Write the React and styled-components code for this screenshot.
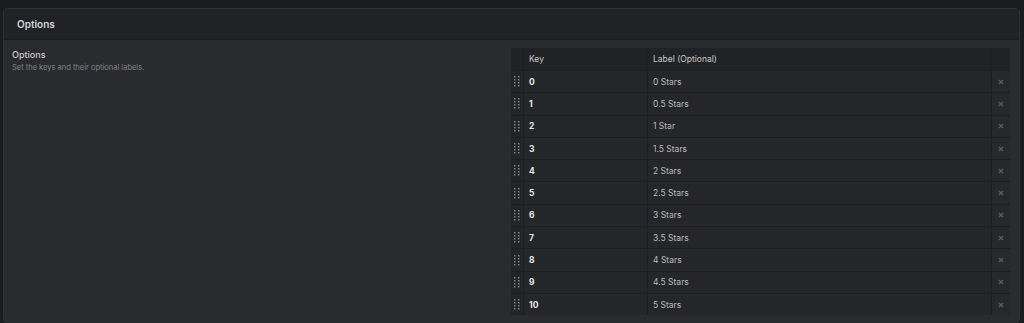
import React from "react";
import styled, { createGlobalStyle } from "styled-components";

const options = [
  ["0", "0 Stars"],
  ["1", "0.5 Stars"],
  ["2", "1 Star"],
  ["3", "1.5 Stars"],
  ["4", "2 Stars"],
  ["5", "2.5 Stars"],
  ["6", "3 Stars"],
  ["7", "3.5 Stars"],
  ["8", "4 Stars"],
  ["9", "4.5 Stars"],
  ["10", "5 Stars"],
];

function DragHandle() {
  return (
    <svg width="6" height="11" viewBox="0 0 6 11">
      {[0, 1, 2, 3].map((r) =>
        [0, 1].map((c) => (
          <rect
            key={r + "-" + c}
            x={c * 4}
            y={r * 3}
            width="1.5"
            height="1.5"
            fill="#808186"
          />
        ))
      )}
    </svg>
  );
}

function CloseIcon() {
  return (
    <svg width="6" height="6" viewBox="0 0 6 6">
      <path d="M1 1 L5 5 M5 1 L1 5" stroke="#595a5f" strokeWidth="1.4" />
    </svg>
  );
}

export default function App() {
  return (
    <>
      <GlobalStyle />
      <Card>
        <CardHeader>Options</CardHeader>
        <CardBody>
          <Intro>
            <h4>Options</h4>
            <p>Set the keys and their optional labels.</p>
          </Intro>
          <Table>
            <HeadRow>
              <Cell />
              <Cell $head>Key</Cell>
              <Cell $head>Label (Optional)</Cell>
              <Cell />
            </HeadRow>
            {options.map(([key, label]) => (
              <Row key={key}>
                <HandleCell>
                  <DragHandle />
                </HandleCell>
                <Cell $bold>{key}</Cell>
                <Cell>{label}</Cell>
                <DeleteCell>
                  <CloseIcon />
                </DeleteCell>
              </Row>
            ))}
          </Table>
        </CardBody>
      </Card>
    </>
  );
}

const GlobalStyle = createGlobalStyle`
  body {
    margin: 0;
    background: #1b1c1f;
    font-family: Inter, "Noto Sans", sans-serif;
    color: #d6d7da;
  }
`;

const Card = styled.div`
  margin: 8px 4px 0 3px;
  border: 1px solid #2f3034;
  border-radius: 5px;
  overflow: hidden;
  background: #2a2b2f;
`;

const CardHeader = styled.div`
  height: 30px;
  display: flex;
  align-items: center;
  padding-left: 13px;
  background: #212225;
  border-bottom: 1px solid #1c1d20;
  font-size: 10px;
  font-weight: 600;
  color: #d3d4d8;
`;

const CardBody = styled.div`
  display: grid;
  grid-template-columns: 1fr 499px;
  padding: 8px 9px 8px 8px;
  gap: 8px;
`;

const Intro = styled.div`
  padding-top: 1px;
  h4 {
    margin: 0;
    font-size: 9px;
    font-weight: 500;
    color: #c9cace;
  }
  p {
    margin: 3px 0 0;
    font-size: 7.5px;
    color: #7f8085;
  }
`;

const Table = styled.div`
  display: grid;
  grid-template-columns: 12px 124px 1fr 19px;
  background: #25262a;
  border-radius: 3px;
  overflow: hidden;
`;

const Row = styled.div`
  display: contents;
  & > div {
    height: 21.3px;
    border-top: 1px solid #1d1e21;
  }
`;

const HeadRow = styled(Row)`
  & > div {
    border-top: none;
    height: 22px;
    background: #212225;
  }
`;

const Cell = styled.div`
  display: flex;
  align-items: center;
  padding-left: 5px;
  font-size: 8.5px;
  font-weight: ${(p) => (p.$bold ? 700 : 400)};
  color: ${(p) => (p.$bold ? "#e4e5e8" : p.$head ? "#c7c8cc" : "#b9babe")};
  border-left: 1px solid #1d1e21;
  &:first-child {
    border-left: none;
  }
`;

const HandleCell = styled(Cell)`
  justify-content: center;
  padding-left: 0;
  background: #232428;
`;

const DeleteCell = styled(Cell)`
  justify-content: center;
  padding-left: 0;
  background: #27282c;
`;
